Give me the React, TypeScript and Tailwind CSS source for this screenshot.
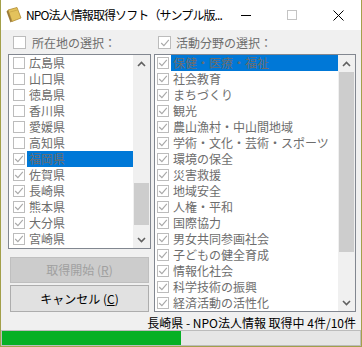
import React from "react";

const prefs: [string, boolean, boolean?][] = [
  ["広島県", false],
  ["山口県", false],
  ["徳島県", false],
  ["香川県", false],
  ["愛媛県", false],
  ["高知県", false],
  ["福岡県", true, true],
  ["佐賀県", true],
  ["長崎県", true],
  ["熊本県", true],
  ["大分県", true],
  ["宮崎県", true],
];

const fields = [
  "保健・医療・福祉",
  "社会教育",
  "まちづくり",
  "観光",
  "農山漁村・中山間地域",
  "学術・文化・芸術・スポーツ",
  "環境の保全",
  "災害救援",
  "地域安全",
  "人権・平和",
  "国際協力",
  "男女共同参画社会",
  "子どもの健全育成",
  "情報化社会",
  "科学技術の振興",
  "経済活動の活性化",
];

function Box({ checked, big }: { checked: boolean; big?: boolean }) {
  return (
    <span
      className={
        big
          ? "flex h-[13px] w-[13px] shrink-0 items-center justify-center border border-[#bcbcbc] bg-white"
          : "flex h-[12px] w-[12px] shrink-0 items-center justify-center border border-[#bcbcbc] bg-white"
      }
    >
      {checked && (
        <svg width="10" height="10" viewBox="0 0 10 10">
          <path d="M1.2 5 L3.9 7.7 L8.8 1.9" fill="none" stroke="#a8a8a8" strokeWidth="1.1" />
        </svg>
      )}
    </span>
  );
}

function Arrow({ up }: { up?: boolean }) {
  return (
    <div className="flex h-[17px] w-full items-center justify-center">
      <svg width="9" height="6" viewBox="0 0 9 6">
        <path
          d={up ? "M1 5 L4.5 1.5 L8 5" : "M1 1 L4.5 4.5 L8 1"}
          fill="none"
          stroke="#606060"
          strokeWidth="1.6"
        />
      </svg>
    </div>
  );
}

export default function App() {
  return (
    <div className="flex h-[347px] w-[362px] flex-col border-x border-b border-[#a3a04a] bg-[#f0f0f0] font-['Noto_Sans_CJK_JP',sans-serif] text-[12px] text-black">
      {/* Title bar */}
      <div className="flex h-[30px] shrink-0 items-center bg-white">
        <div className="ml-[4px] flex h-[18px] w-[18px] shrink-0 items-center justify-center">
          <svg width="18" height="18" viewBox="0 0 18 18">
            <path d="M3 4 L12 1.5 L16 12 L7 15.5 Z" fill="#e3c25c" stroke="#b08a30" strokeWidth="0.8" />
            <path d="M3 4 L7 15.5 L5.5 16.5 L1.5 5.5 Z" fill="#9b7a35" />
            <path d="M5 6 L12.5 4" stroke="#c9a648" strokeWidth="0.8" />
          </svg>
        </div>
        <div className="ml-[3px] min-w-0 flex-1 overflow-hidden whitespace-nowrap text-[12px] leading-[16px] tracking-[-0.9px] text-black">
          NPO法人情報取得ソフト（サンプル版...
        </div>
        <div className="flex h-[30px] shrink-0">
          <div className="flex h-[30px] w-[46px] items-center justify-center">
            <div className="h-[1px] w-[10px] bg-black" />
          </div>
          <div className="flex h-[30px] w-[46px] items-center justify-center">
            <div className="h-[10px] w-[10px] border border-[#c4c4c4]" />
          </div>
          <div className="flex h-[30px] w-[46px] items-center justify-center">
            <svg width="11" height="11" viewBox="0 0 11 11">
              <path d="M0.5 0.5 L10.5 10.5 M10.5 0.5 L0.5 10.5" stroke="#000" strokeWidth="1" />
            </svg>
          </div>
        </div>
      </div>

      {/* Body */}
      <div className="flex pl-[7px] pt-[6px]">
        {/* Left column */}
        <div className="flex w-[143px] flex-col">
          <div className="flex h-[13px] items-center pl-[5px]">
            <Box checked={false} big />
            <span className="ml-[6px] whitespace-nowrap leading-[13px] text-[#6d6d6d]">所在地の選択：</span>
          </div>
          <div className="mt-[5px] flex h-[195px] border border-[#828790] bg-white">
            <div className="flex flex-1 flex-col pl-[4px]">
              {prefs.map(([name, checked, sel]) => (
                <div key={name} className="flex h-[16px] items-center">
                  <Box checked={checked} />
                  <div
                    className={
                      sel
                        ? "ml-[2px] flex h-[16px] flex-1 items-center bg-[#0078d7] pl-[2px] leading-[16px] text-[#6d6d6d]"
                        : "ml-[2px] flex h-[16px] flex-1 items-center pl-[2px] leading-[16px] text-[#6d6d6d]"
                    }
                  >
                    {name}
                  </div>
                </div>
              ))}
            </div>
            <div className="flex w-[17px] flex-col bg-[#f0f0f0]">
              <Arrow up />
              <div className="flex-1 px-[1px]">
                <div className="mt-[111px] h-[42px] w-full bg-[#cdcdcd]" />
              </div>
              <Arrow />
            </div>
          </div>
          <div className="ml-[2px] mt-[8px] flex h-[26px] w-[139px] items-center justify-center border border-[#bfbfbf] bg-[#cccccc] text-[#a0a0a0]">
            取得開始 (<span className="underline">R</span>)
          </div>
          <div className="ml-[2px] mt-[2px] flex h-[27px] w-[139px] items-center justify-center border border-[#adadad] bg-[#e1e1e1] text-black">
            キャンセル (<span className="underline">C</span>)
          </div>
        </div>

        {/* Right column */}
        <div className="ml-[3px] flex w-[202px] flex-col">
          <div className="flex h-[13px] items-center pl-[4px]">
            <Box checked big />
            <span className="ml-[5px] whitespace-nowrap leading-[13px] text-[#6d6d6d]">活動分野の選択：</span>
          </div>
          <div className="mt-[5px] flex h-[258px] border border-[#828790] bg-white">
            <div className="flex flex-1 flex-col pl-[2px]">
              {fields.map((name, i) => (
                <div key={name} className="flex h-[16px] items-center">
                  <Box checked />
                  <div
                    className={
                      i === 0
                        ? "ml-[2px] flex h-[16px] flex-1 items-center whitespace-nowrap bg-[#0078d7] pl-[2px] leading-[16px] text-[#6d6d6d]"
                        : "ml-[2px] flex h-[16px] flex-1 items-center whitespace-nowrap pl-[2px] leading-[16px] text-[#6d6d6d]"
                    }
                  >
                    {name}
                  </div>
                </div>
              ))}
            </div>
            <div className="flex w-[17px] flex-col bg-[#f0f0f0]">
              <Arrow up />
              <div className="flex-1 px-[1px]">
                <div className="h-[180px] w-full bg-[#cdcdcd]" />
              </div>
              <Arrow />
            </div>
          </div>
        </div>
      </div>

      {/* Status */}
      <div className="flex h-[18px] justify-end pr-[5px] pt-[4px]">
        <span className="whitespace-nowrap leading-[14px] text-black">長崎県 - NPO法人情報 取得中 4件/10件</span>
      </div>

      {/* Progress */}
      <div className="h-[16px] w-full border border-[#bcbcbc] bg-[#e6e6e6]">
        <div className="h-full w-[179px] bg-[#06b025]" />
      </div>
    </div>
  );
}
